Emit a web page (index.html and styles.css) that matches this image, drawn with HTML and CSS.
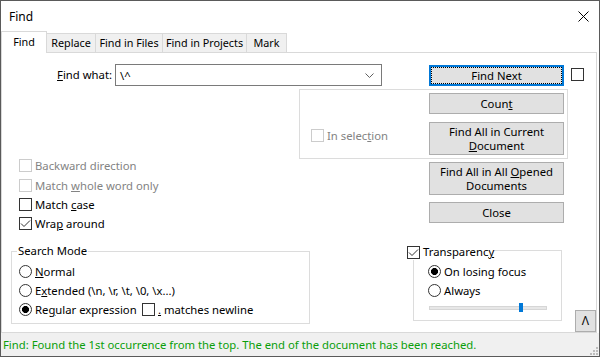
FILE: index.html
```html
<!DOCTYPE html>
<html lang="en">

<head>
    <meta charset="utf-8" />
    <title>Find</title>
    <link rel="stylesheet" href="styles.css">
</head>

<body>
    <div class="window">
        <div class="titlebar">
            <span class="title">Find</span>
            <svg class="close" width="11" height="11" viewBox="0 0 11 11">
                <path d="M0.5 0.5 L10.5 10.5 M10.5 0.5 L0.5 10.5" stroke="#000" stroke-width="1" fill="none" />
            </svg>
        </div>

        <div class="tabs">
            <div class="tab active tab-find">Find</div>
            <div class="tab tab-replace">Replace</div>
            <div class="tab tab-files">Find in Files</div>
            <div class="tab tab-projects">Find in Projects</div>
            <div class="tab tab-mark">Mark</div>
        </div>

        <div class="panel">
            <!-- search term row -->
            <div class="row-find">
                <label class="find-label"><u>F</u>ind what:</label>
                <div class="combo">
                    <span class="combo-text">\^</span>
                    <svg width="9" height="5" viewBox="0 0 9 5">
                        <path d="M0.5 0.5 L4.5 4.5 L8.5 0.5" stroke="#606060" fill="none" />
                    </svg>
                </div>
                <button type="button" class="btn default">Find Next</button>
                <span class="box top-box"></span>
            </div>

            <!-- in selection group -->
            <div class="selection">
                <label class="check disabled in-sel"><span class="box"></span><span>In selec<u>t</u>ion</span></label>
                <div class="btn-col">
                    <button type="button" class="btn">Coun<u>t</u></button>
                    <button type="button" class="btn tall gap">Find All in Current<br><u>D</u>ocument</button>
                </div>
            </div>

            <!-- options and more buttons -->
            <div class="row-mid">
                <div class="options">
                    <label class="check disabled"><span class="box"></span><span>Backward direction</span></label>
                    <label class="check disabled"><span class="box"></span><span>Match <u>w</u>hole word only</span></label>
                    <label class="check"><span class="box"></span><span>Match <u>c</u>ase</span></label>
                    <label class="check"><span class="box">
                        <svg width="11" height="11" viewBox="0 0 11 11"><path d="M1 5.5 L4 8.5 L10 2.5" stroke="#333" fill="none" /></svg>
                    </span><span>Wra<u>p</u> around</span></label>
                </div>
                <div class="btn-col">
                    <button type="button" class="btn tall first">Find All in All <u>O</u>pened<br>Documents</button>
                    <button type="button" class="btn close-btn">Close</button>
                </div>
            </div>

            <!-- search mode and transparency -->
            <div class="row-bottom">
                <fieldset class="group search-mode">
                    <legend>Search Mode</legend>
                    <label class="radio-row"><span class="radio"></span><span><u>N</u>ormal</span></label>
                    <label class="radio-row"><span class="radio"></span><span>E<u>x</u>tended (\n, \r, \t, \0, \x...)</span></label>
                    <div class="radio-row">
                        <label class="regex"><span class="radio on"></span><span>Re<u>g</u>ular expression</span></label>
                        <label class="check"><span class="box"></span><span><u>.</u> matches newline</span></label>
                    </div>
                </fieldset>

                <fieldset class="group transparency">
                    <legend>
                        <span class="check"><span class="box">
                            <svg width="11" height="11" viewBox="0 0 11 11"><path d="M1 5.5 L4 8.5 L10 2.5" stroke="#333" fill="none" /></svg>
                        </span><span>Transparenc<u>y</u></span></span>
                    </legend>
                    <label class="radio-row"><span class="radio on"></span><span>On losing focus</span></label>
                    <label class="radio-row"><span class="radio"></span><span>Always</span></label>
                    <div class="slider">
                        <span class="thumb"></span>
                    </div>
                </fieldset>

                <button type="button" class="btn up">&Lambda;</button>
            </div>
        </div>

        <div class="status">
            <span class="status-text">Find: Found the 1st occurrence from the top. The end of the document has been reached.</span>
            <svg class="grip" width="8" height="8" viewBox="0 0 8 8">
                <rect x="6" y="0" width="2" height="2" fill="#bcbcbc" />
                <rect x="3" y="3" width="2" height="2" fill="#bcbcbc" />
                <rect x="6" y="3" width="2" height="2" fill="#bcbcbc" />
                <rect x="0" y="6" width="2" height="2" fill="#bcbcbc" />
                <rect x="3" y="6" width="2" height="2" fill="#bcbcbc" />
                <rect x="6" y="6" width="2" height="2" fill="#bcbcbc" />
            </svg>
        </div>
    </div>
</body>

</html>
```

FILE: styles.css
```css
* {
    box-sizing: border-box;
}

body {
    margin: 0;
    font-family: "Noto Sans", "DejaVu Sans", sans-serif;
    font-size: 11.3px;
    color: #000;
}

u {
    text-decoration: underline;
}

.window {
    width: 600px;
    height: 357px;
    border: 1px solid #5a5a5a;
    background: #fff;
    display: flex;
    flex-direction: column;
}

/* title bar */
.titlebar {
    height: 30px;
    flex-shrink: 0;
    display: flex;
    align-items: center;
    padding-left: 8px;
    font-size: 12px;
}

.title {
    flex: 1;
}

.close {
    margin-right: 10px;
}

/* tabs */
.tabs {
    height: 21px;
    flex-shrink: 0;
    display: flex;
    align-items: flex-end;
    position: relative;
    z-index: 1;
    font-size: 10.8px;
}

.tab {
    height: 19px;
    background: #f0f0f0;
    border: 1px solid #d9d9d9;
    border-bottom: 0;
    margin-left: -1px;
    text-align: center;
    line-height: 18px;
    white-space: nowrap;
}

.tab.active {
    align-self: flex-start;
    height: 22px;
    margin-left: 0;
    margin-bottom: -1px;
    background: #fff;
    line-height: 19px;
    position: relative;
    z-index: 2;
}

.tab-find { width: 46px; }
.tab-replace { width: 50px; }
.tab-files { width: 68px; }
.tab-projects { width: 85px; }
.tab-mark { width: 41px; }

/* main panel */
.panel {
    height: 281px;
    flex-shrink: 0;
    margin-right: 2px;
    border: 1px solid #d9d9d9;
    display: flex;
    flex-direction: column;
}

.row-find {
    margin-top: 11px;
    height: 22px;
    display: flex;
    align-items: flex-start;
}

.find-label {
    width: 110px;
    margin-right: 3px;
    text-align: right;
    line-height: 22px;
}

.combo {
    width: 267px;
    height: 22px;
    border: 1px solid #7a7a7a;
    display: flex;
    align-items: center;
    padding: 0 7px 0 4px;
}

.combo-text {
    flex: 1;
}

/* buttons */
.btn {
    display: block;
    width: 135px;
    height: 21px;
    padding: 0;
    font-family: inherit;
    font-size: 11.3px;
    line-height: 14px;
    color: #000;
    background: #e1e1e1;
    border: 1px solid #adadad;
}

.btn.tall {
    height: 33px;
}

.btn.default {
    margin-top: 1px;
    margin-left: 47px;
    border: 2px solid #0078d7;
    outline: 1px dotted #000;
    outline-offset: -3px;
}

.btn.gap {
    margin-top: 8px;
}

.btn.first {
    margin-top: 3px;
}

.btn.close-btn {
    margin-top: 7px;
}

.btn.up {
    width: 21px;
    height: 22px;
    margin-left: 13px;
    margin-top: 68px;
    flex-shrink: 0;
    font-size: 12px;
    line-height: 18px;
}

/* check boxes and radios */
.box {
    display: inline-flex;
    align-items: center;
    justify-content: center;
    width: 13px;
    height: 13px;
    margin-right: 3px;
    border: 1px solid #333;
    background: #fff;
    flex-shrink: 0;
}

.top-box {
    margin-left: 7px;
    margin-top: 4px;
}

.check {
    display: flex;
    align-items: center;
    white-space: nowrap;
}

.check.disabled {
    color: #838383;
}

.check.disabled .box {
    border-color: #cccccc;
}

.radio {
    display: inline-block;
    width: 13px;
    height: 13px;
    margin-right: 3px;
    border: 1px solid #333;
    border-radius: 50%;
    background: #fff;
    flex-shrink: 0;
}

.radio.on {
    background: radial-gradient(circle, #000 3.2px, #fff 3.8px);
}

.radio-row {
    height: 19px;
    display: flex;
    align-items: center;
    white-space: nowrap;
}

/* in selection group box */
.selection {
    margin-top: 3px;
    margin-left: 297px;
    width: 269px;
    height: 70px;
    flex-shrink: 0;
    border: 1px solid #dcdcdc;
    display: flex;
    justify-content: space-between;
    padding: 3px 3px 0 11px;
}

.in-sel {
    height: 18px;
    margin-top: 33px;
}

.row-mid {
    height: 83px;
    flex-shrink: 0;
    display: flex;
}

.options {
    width: 427px;
    flex-shrink: 0;
    margin-top: -3px;
    padding-left: 17px;
}

.options .check {
    height: 19.4px;
}

/* bottom group boxes */
.row-bottom {
    flex: 1;
    display: flex;
    align-items: flex-start;
}

.group {
    margin: 0;
    flex-shrink: 0;
    border: 1px solid #dcdcdc;
}

.search-mode {
    margin-left: 9px;
    margin-top: 1px;
    width: 299px;
    height: 81px;
    padding: 3px 0 0 5px;
}

.search-mode legend {
    padding: 0 1px;
    line-height: 16px;
}

.search-mode .radio-row {
    margin-left: 2px;
}

.regex {
    width: 123px;
    display: flex;
    align-items: center;
}

.transparency {
    margin-left: 103px;
    margin-top: -2px;
    width: 149px;
    height: 81px;
    padding: 2px 0 0 14px;
}

.transparency legend {
    margin-left: -21px;
    padding: 4px 0 0 0;
    line-height: 16px;
}

.slider {
    position: relative;
    margin-top: 6px;
    margin-left: 1px;
    width: 118px;
    height: 4px;
    background: #e7e7e7;
    border: 1px solid #d6d6d6;
}

.thumb {
    position: absolute;
    left: 89px;
    top: -4px;
    width: 4px;
    height: 9px;
    background: #0078d7;
}

/* status bar */
.status {
    flex: 1;
    background: #f0f0f0;
    color: #0a9e0a;
    display: flex;
    align-items: center;
    padding-left: 2px;
}

.status-text {
    flex: 1;
}

.grip {
    align-self: flex-end;
    margin: 0 1px 1px 0;
}
```
